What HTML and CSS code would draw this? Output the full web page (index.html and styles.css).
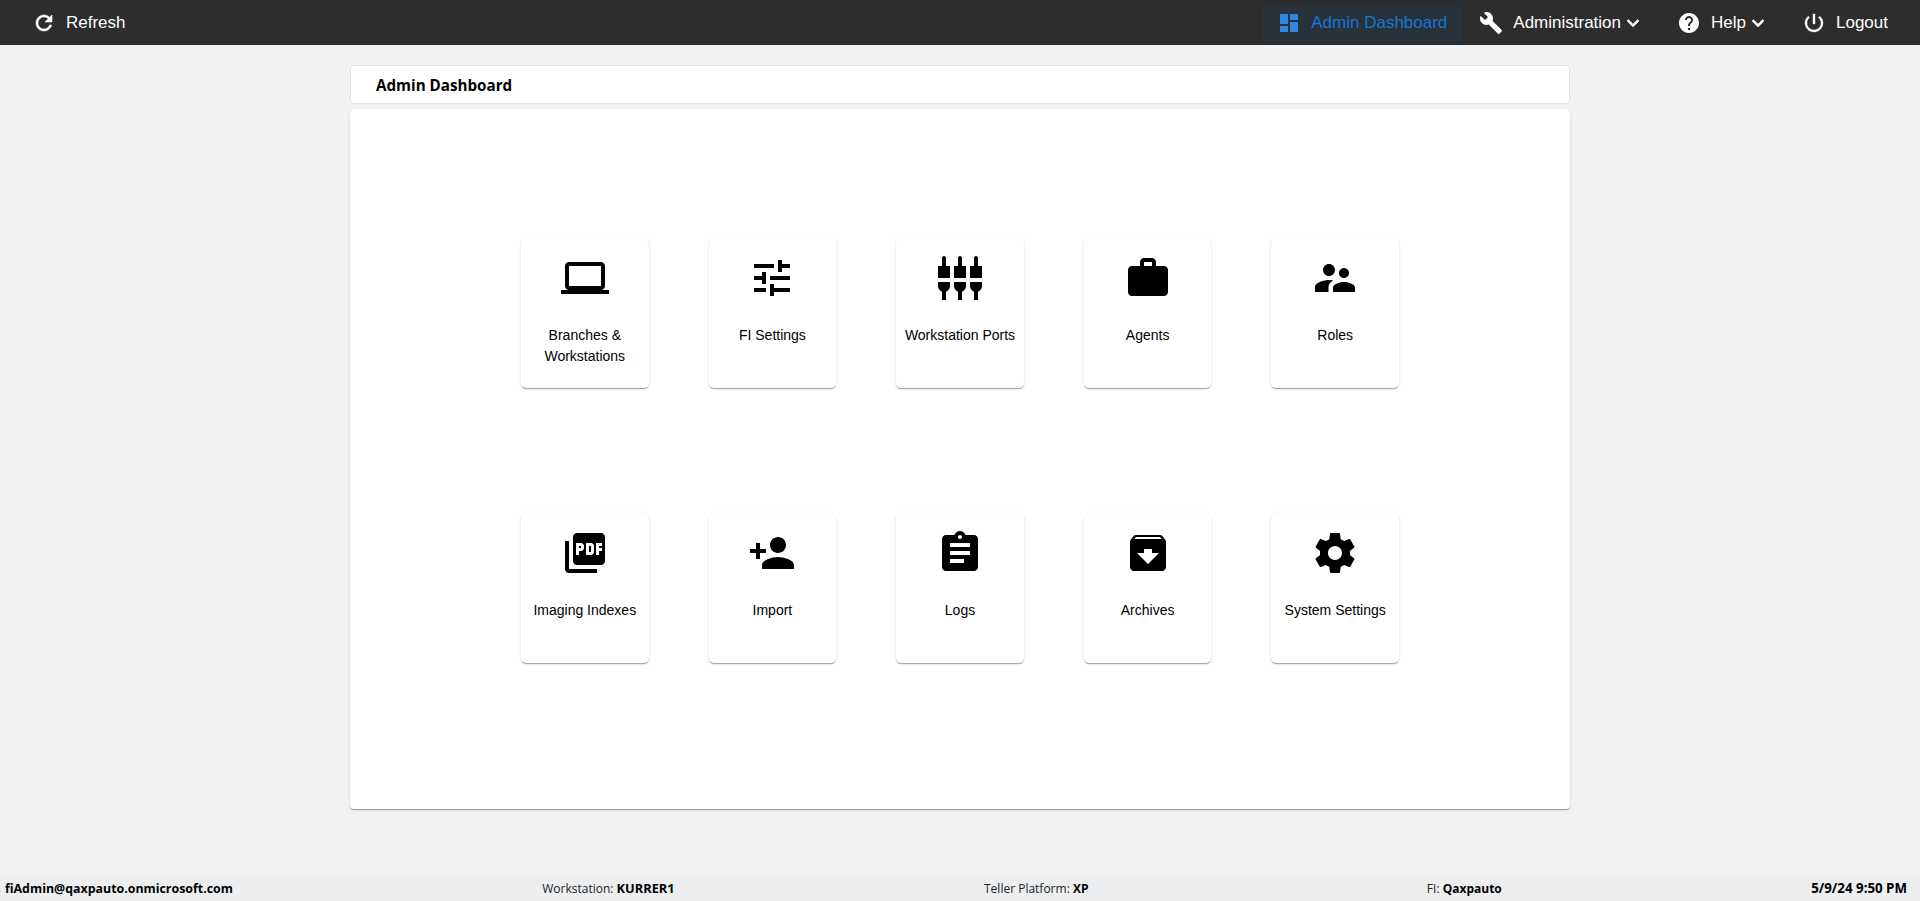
FILE: index.html
```html
<!DOCTYPE html>
<html lang="en">
<head>
<meta charset="utf-8">
<title>Admin Dashboard</title>
<link rel="stylesheet" href="styles.css">
</head>
<body>
<header class="topbar">
  <div class="nav-left">
    <a class="nav-item refresh"><svg class="nav-icon heavy" viewBox="0 0 24 24"><path d="M17.65 6.35C16.2 4.9 14.21 4 12 4c-4.42 0-7.99 3.58-7.99 8s3.57 8 7.99 8c3.73 0 6.84-2.55 7.73-6h-2.08c-.82 2.33-3.04 4-5.65 4-3.31 0-6-2.69-6-6s2.69-6 6-6c1.66 0 3.14.69 4.22 1.78L13 11h7V4l-2.35 2.35z"/></svg><span>Refresh</span></a>
  </div>
  <nav class="nav-right">
    <a class="nav-item active"><svg class="nav-icon" viewBox="0 0 24 24"><path d="M3 13h8V3H3v10zm0 8h8v-6H3v6zm10 0h8V11h-8v10zm0-18v6h8V3h-8z"/></svg><span>Admin Dashboard</span></a>
    <a class="nav-item"><svg class="nav-icon" viewBox="0 0 24 24"><path d="M22.7 19l-9.1-9.1c.9-2.3.4-5-1.5-6.9-2-2-5-2.4-7.4-1.3L9 6 6 9 1.6 4.7C.4 7.1.9 10.1 2.9 12.1c1.9 1.9 4.6 2.4 6.9 1.5l9.1 9.1c.4.4 1 .4 1.4 0l2.3-2.3c.5-.4.5-1.1.1-1.4z"/></svg><span>Administration</span><svg class="chevron heavy" viewBox="0 0 24 24"><path d="M16.59 8.59L12 13.17 7.41 8.59 6 10l6 6 6-6z"/></svg></a>
    <a class="nav-item help"><svg class="nav-icon" viewBox="0 0 24 24"><path d="M12 2C6.48 2 2 6.48 2 12s4.48 10 10 10 10-4.48 10-10S17.52 2 12 2zm1 17h-2v-2h2v2zm2.07-7.75l-.9.92C13.45 12.9 13 13.5 13 15h-2v-.5c0-1.1.45-2.1 1.17-2.83l1.24-1.26c.37-.36.59-.86.59-1.41 0-1.1-.9-2-2-2s-2 .9-2 2H8c0-2.21 1.79-4 4-4s4 1.79 4 4c0 .88-.36 1.68-.93 2.25z"/></svg><span>Help</span><svg class="chevron heavy" viewBox="0 0 24 24"><path d="M16.59 8.59L12 13.17 7.41 8.59 6 10l6 6 6-6z"/></svg></a>
    <a class="nav-item logout"><svg class="nav-icon heavy-soft" viewBox="0 0 24 24"><path d="M13 3h-2v10h2V3zm4.83 2.17l-1.42 1.42C17.99 7.86 19 9.81 19 12c0 3.87-3.13 7-7 7s-7-3.13-7-7c0-2.19 1.01-4.14 2.58-5.42L6.17 5.17C4.23 6.82 3 9.26 3 12c0 4.97 4.03 9 9 9s9-4.03 9-9c0-2.74-1.23-5.18-3.17-6.83z"/></svg><span>Logout</span></a>
  </nav>
</header>

<main class="content">
  <div class="title-card">Admin Dashboard</div>
  <section class="panel">
    <div class="tiles">
      <a class="tile"><svg class="tile-icon" viewBox="0 0 24 24"><path d="M20 18c1.1 0 1.99-.9 1.99-2L22 6c0-1.1-.9-2-2-2H4c-1.1 0-2 .9-2 2v10c0 1.1.9 2 2 2H0v2h24v-2h-4zM4 6h16v10H4V6z"/></svg><span class="tile-label">Branches &amp; Workstations</span></a>
      <a class="tile"><svg class="tile-icon" viewBox="0 0 24 24"><path d="M3 17v2h6v-2H3zM3 5v2h10V5H3zm10 16v-2h8v-2h-8v-2h-2v6h2zM7 9v2H3v2h4v2h2V9H7zm14 4v-2H11v2h10zm-6-4h2V7h4V5h-4V3h-2v6z"/></svg><span class="tile-label">FI Settings</span></a>
      <a class="tile"><svg class="tile-icon" viewBox="0 0 24 24"><path d="M5 2c0-.55-.45-1-1-1s-1 .45-1 1v4H1v6h6V6H5V2zm4 14c0 1.3.84 2.4 2 2.82V23h2v-4.18c1.16-.41 2-1.51 2-2.82v-2H9v2zm-8 0c0 1.3.84 2.4 2 2.82V23h2v-4.18C6.16 18.4 7 17.3 7 16v-2H1v2zM21 6V2c0-.55-.45-1-1-1s-1 .45-1 1v4h-2v6h6V6h-2zm-8-4c0-.55-.45-1-1-1s-1 .45-1 1v4H9v6h6V6h-2V2zm4 14c0 1.3.84 2.4 2 2.82V23h2v-4.18c1.16-.41 2-1.51 2-2.82v-2h-6v2z"/></svg><span class="tile-label">Workstation Ports</span></a>
      <a class="tile"><svg class="tile-icon" viewBox="0 0 24 24"><path d="M20 6h-4V4c0-1.11-.89-2-2-2h-4c-1.11 0-2 .89-2 2v2H4c-1.11 0-1.99.89-1.99 2L2 19c0 1.11.89 2 2 2h16c1.11 0 2-.89 2-2V8c0-1.11-.89-2-2-2zm-6 0h-4V4h4v2z"/></svg><span class="tile-label">Agents</span></a>
      <a class="tile"><svg class="tile-icon" viewBox="0 0 24 24"><path d="M16.5 12c1.38 0 2.49-1.12 2.49-2.5S17.88 7 16.5 7C15.12 7 14 8.12 14 9.5s1.12 2.5 2.5 2.5zM9 11c1.66 0 2.99-1.34 2.99-3S10.66 5 9 5C7.34 5 6 6.34 6 8s1.34 3 3 3zm7.5 3c-1.83 0-5.5.92-5.5 2.75V19h11v-2.25c0-1.83-3.67-2.75-5.5-2.75zM9 13c-2.33 0-7 1.17-7 3.5V19h6.75v-2.25c0-.85.33-2.34 2.37-3.47C10.25 13.1 9.42 13 9 13z"/></svg><span class="tile-label">Roles</span></a>
      <a class="tile"><svg class="tile-icon" viewBox="0 0 24 24"><path d="M20 2H8c-1.1 0-2 .9-2 2v12c0 1.1.9 2 2 2h12c1.1 0 2-.9 2-2V4c0-1.1-.9-2-2-2zm-8.5 7.5c0 .83-.67 1.5-1.5 1.5H9v2H7.5V7H10c.83 0 1.5.67 1.5 1.5v1zm5 2c0 .83-.67 1.5-1.5 1.5h-2.5V7H15c.83 0 1.5.67 1.5 1.5v3zm4-3H19v1h1.5V11H19v2h-1.5V7h3v1.5zM9 9.5h1v-1H9v1zM4 6H2v14c0 1.1.9 2 2 2h14v-2H4V6zm10 5.5h1v-3h-1v3z"/></svg><span class="tile-label">Imaging Indexes</span></a>
      <a class="tile"><svg class="tile-icon" viewBox="0 0 24 24"><path d="M15 12c2.21 0 4-1.79 4-4s-1.79-4-4-4-4 1.79-4 4 1.79 4 4 4zm-9-2V7H4v3H1v2h3v3h2v-3h3v-2H6zm9 4c-2.67 0-8 1.34-8 4v2h16v-2c0-2.66-5.33-4-8-4z"/></svg><span class="tile-label">Import</span></a>
      <a class="tile"><svg class="tile-icon" viewBox="0 0 24 24"><path d="M19 3h-4.18C14.4 1.84 13.3 1 12 1c-1.3 0-2.4.84-2.82 2H5c-1.1 0-2 .9-2 2v14c0 1.1.9 2 2 2h14c1.1 0 2-.9 2-2V5c0-1.1-.9-2-2-2zm-7 0c.55 0 1 .45 1 1s-.45 1-1 1-1-.45-1-1 .45-1 1-1zm2 14H7v-2h7v2zm3-4H7v-2h10v2zm0-4H7V7h10v2z"/></svg><span class="tile-label">Logs</span></a>
      <a class="tile"><svg class="tile-icon" viewBox="0 0 24 24"><path d="M20.54 5.23l-1.39-1.68C18.88 3.21 18.47 3 18 3H6c-.47 0-.88.21-1.16.55L3.46 5.23C3.17 5.57 3 6.02 3 6.5V19c0 1.1.9 2 2 2h14c1.1 0 2-.9 2-2V6.5c0-.48-.17-.93-.46-1.27zM12 17.5L6.5 12H10v-2h4v2h3.5L12 17.5zM5.12 5l.81-1h12l.94 1H5.12z"/></svg><span class="tile-label">Archives</span></a>
      <a class="tile"><svg class="tile-icon" viewBox="0 0 24 24"><path d="M19.43 12.98c.04-.32.07-.64.07-.98s-.03-.66-.07-.98l2.11-1.65c.19-.15.24-.42.12-.64l-2-3.46c-.12-.22-.39-.3-.61-.22l-2.49 1c-.52-.4-1.08-.73-1.69-.98l-.38-2.65C14.46 2.18 14.25 2 14 2h-4c-.25 0-.46.18-.49.42l-.38 2.65c-.61.25-1.17.59-1.69.98l-2.49-1c-.23-.09-.49 0-.61.22l-2 3.46c-.13.22-.07.49.12.64l2.11 1.65c-.04.32-.07.65-.07.98s.03.66.07.98l-2.11 1.65c-.19.15-.24.42-.12.64l2 3.46c.12.22.39.3.61.22l2.49-1c.52.4 1.08.73 1.69.98l.38 2.65c.03.24.24.42.49.42h4c.25 0 .46-.18.49-.42l.38-2.65c.61-.25 1.17-.59 1.69-.98l2.49 1c.23.09.49 0 .61-.22l2-3.46c.12-.22.07-.49-.12-.64l-2.11-1.65zM12 15.5c-1.93 0-3.5-1.57-3.5-3.5s1.57-3.5 3.5-3.5 3.5 1.57 3.5 3.5-1.57 3.5-3.5 3.5z"/></svg><span class="tile-label">System Settings</span></a>
    </div>
  </section>
</main>

<footer class="statusbar">
  <b class="status-email">fiAdmin@qaxpauto.onmicrosoft.com</b>
  <span>Workstation: <b class="status-station">KURRER1</b></span>
  <span>Teller Platform: <b>XP</b></span>
  <span class="status-fi">FI: <b>Qaxpauto</b></span>
  <b class="status-date">5/9/24 9:50 PM</b>
</footer>
</body>
</html>
```

FILE: styles.css
```css
* { box-sizing: border-box; }
html, body { height: 100%; }
body {
  margin: 0;
  height: 100vh;
  overflow: hidden;
  display: flex;
  flex-direction: column;
  background: #f2f2f2;
  color: #000;
  font-family: "Liberation Sans", Arial, sans-serif;
}
.topbar {
  flex: none;
  height: 45px;
  display: flex;
  justify-content: space-between;
  align-items: center;
  padding: 0 32px 0 32px;
  background: #2d2d2d;
  color: #fff;
  font-size: 17px;
}
.nav-left, .nav-right { display: flex; align-items: center; }
.nav-item {
  display: flex;
  align-items: center;
  height: 36px;
  margin-top: 1px;
  padding: 0 17px;
  border-radius: 4px;
  gap: 10px;
}
.nav-item svg { fill: currentColor; flex: none; }
.nav-icon { width: 24px; height: 24px; }
.chevron { width: 24px; height: 24px; margin-left: -10px; }
.heavy { stroke: currentColor; stroke-width: .6; }
.heavy-soft { stroke: currentColor; stroke-width: .35; }
.refresh { padding: 0; gap: 10px; }
.active {
  padding: 0 15px;
  background: #27323b;
  color: #1976d2;
}
.active .nav-icon { color: #2f88e0; }
.help { padding-left: 15px; }
.logout { padding: 0 0 0 15px; }
.content {
  flex: 1;
  min-height: 0;
  width: 1220px;
  margin: 0 auto;
  padding-top: 20px;
}
.title-card {
  height: 39px;
  padding-left: 25px;
  display: flex;
  align-items: center;
  background: #fff;
  border: 1px solid #e2e2e2;
  border-radius: 4px;
  font-family: "Open Sans", sans-serif;
  font-size: 15.2px;
  font-weight: 700;
}
.panel {
  height: 700px;
  margin-top: 5px;
  padding-top: 129px;
  background: #fff;
  border-radius: 4px;
  box-shadow: 0 2px 1px -1px rgba(0,0,0,.2), 0 1px 1px 0 rgba(0,0,0,.14), 0 1px 3px 0 rgba(0,0,0,.12);
}
.tiles {
  width: 878px;
  margin: 0 auto;
  display: grid;
  grid-template-columns: repeat(5, 1fr);
  column-gap: 60px;
  row-gap: 125px;
}
.tile {
  height: 150px;
  padding: 16px 8px 0;
  display: flex;
  flex-direction: column;
  align-items: center;
  text-align: center;
  border-radius: 5px;
  background: #fff;
  box-shadow: 0 2px 1px -1px rgba(0,0,0,.2), 0 1px 1px 0 rgba(0,0,0,.14), 0 1px 3px 0 rgba(0,0,0,.12);
}
.tile-icon { width: 48px; height: 48px; flex: none; fill: #000; }
.tile-label {
  margin-top: 23px;
  font-size: 14px;
  line-height: 21px;
}
.statusbar {
  flex: none;
  height: 26px;
  display: flex;
  justify-content: space-between;
  align-items: center;
  padding: 0 13px 0 5px;
  background: #eceef0;
  color: #222;
  font-family: "Open Sans", sans-serif;
  font-size: 12px;
}
.statusbar b { color: #000; font-weight: 700; }
.statusbar .status-email { font-size: 12.4px; }
.statusbar .status-station { font-size: 12.8px; }
.statusbar .status-date { font-size: 13.3px; }
.status-fi { margin-left: 29px; }
```
